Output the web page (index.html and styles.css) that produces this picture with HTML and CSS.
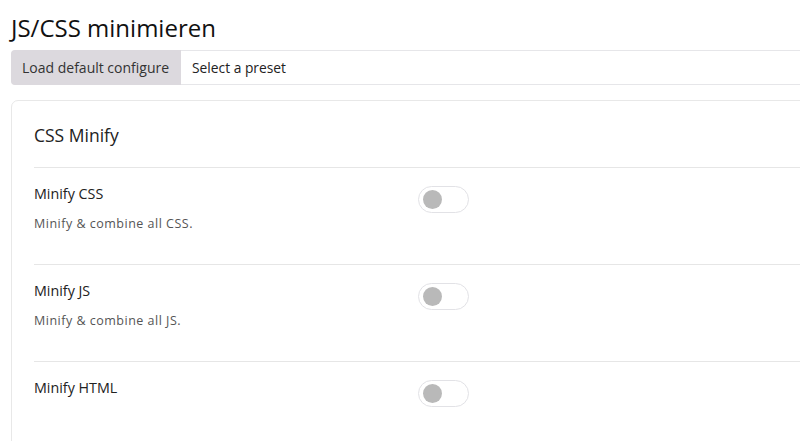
FILE: index.html
```html
<!DOCTYPE html>
<html>
<head>
<meta charset="utf-8">
<link rel="stylesheet" href="styles.css">
</head>
<body>
<div class="page">
  <h1 class="title">JS/CSS minimieren</h1>
  <div class="input-group">
    <button class="btn-default">Load default configure</button>
    <div class="preset">Select a preset</div>
  </div>
  <div class="card">
    <div class="card-title">CSS Minify</div>
    <div class="row">
      <div class="row-text">
        <div class="label">Minify CSS</div>
        <div class="desc">Minify &amp; combine all CSS.</div>
      </div>
      <div class="toggle"><span class="knob"></span></div>
    </div>
    <div class="row">
      <div class="row-text">
        <div class="label">Minify JS</div>
        <div class="desc">Minify &amp; combine all JS.</div>
      </div>
      <div class="toggle"><span class="knob"></span></div>
    </div>
    <div class="row">
      <div class="row-text">
        <div class="label">Minify HTML</div>
      </div>
      <div class="toggle"><span class="knob"></span></div>
    </div>
  </div>
</div>
</body>
</html>
```

FILE: styles.css
```css
html, body {
  margin: 0;
  padding: 0;
  background: #ffffff;
  overflow: hidden;
}
body {
  font-family: "Open Sans", "Noto Sans", sans-serif;
  color: #212529;
}
.page {
  padding-left: 11px;
  width: 830px;
}
.title {
  margin: 0;
  padding-top: 12px;
  font-size: 24px;
  font-weight: 400;
  line-height: 32px;
  height: 38px;
  color: #111;
}
.input-group {
  display: flex;
  height: 35px;
  border: 1px solid #e6e6e9;
  border-radius: 5px;
  box-sizing: border-box;
}
.btn-default {
  border: none;
  background: #dcd9de;
  font-family: inherit;
  font-size: 14px;
  color: #333;
  padding: 0 10px 0 11px;
  width: 170px;
  border-radius: 4px 0 0 4px;
  margin: -1px 0 -1px -1px;
  text-align: left;
}
.preset {
  display: flex;
  align-items: center;
  padding-left: 11px;
  font-size: 13.8px;
  color: #222;
}
.card {
  margin-top: 15px;
  border: 1px solid #e8e8e8;
  border-radius: 7px;
  padding: 0 0 0 22px;
  height: 400px;
}
.card-title {
  font-size: 17.5px;
  color: #222;
  height: 65px;
  line-height: 66px;
  border-bottom: 1px solid #e6e6e6;
  padding-top: 1px;
}
.row {
  display: flex;
  height: 96px;
  border-bottom: 1px solid #e6e6e6;
}
.row:last-child {
  border-bottom: none;
}
.row-text {
  width: 384px;
  padding-top: 16px;
}
.label {
  font-size: 14.3px;
  color: #222;
  line-height: 20px;
}
.desc {
  font-size: 12.5px;
  letter-spacing: 0.5px;
  color: #555;
  margin-top: 12px;
  line-height: 16px;
}
.toggle {
  margin-top: 18px;
  width: 51px;
  height: 27px;
  box-sizing: border-box;
  border: 1px solid #e2e2e6;
  border-radius: 14px;
  display: flex;
  align-items: center;
  padding-left: 4px;
}
.knob {
  width: 19px;
  height: 19px;
  border-radius: 50%;
  background: #b9b9b9;
}
```
